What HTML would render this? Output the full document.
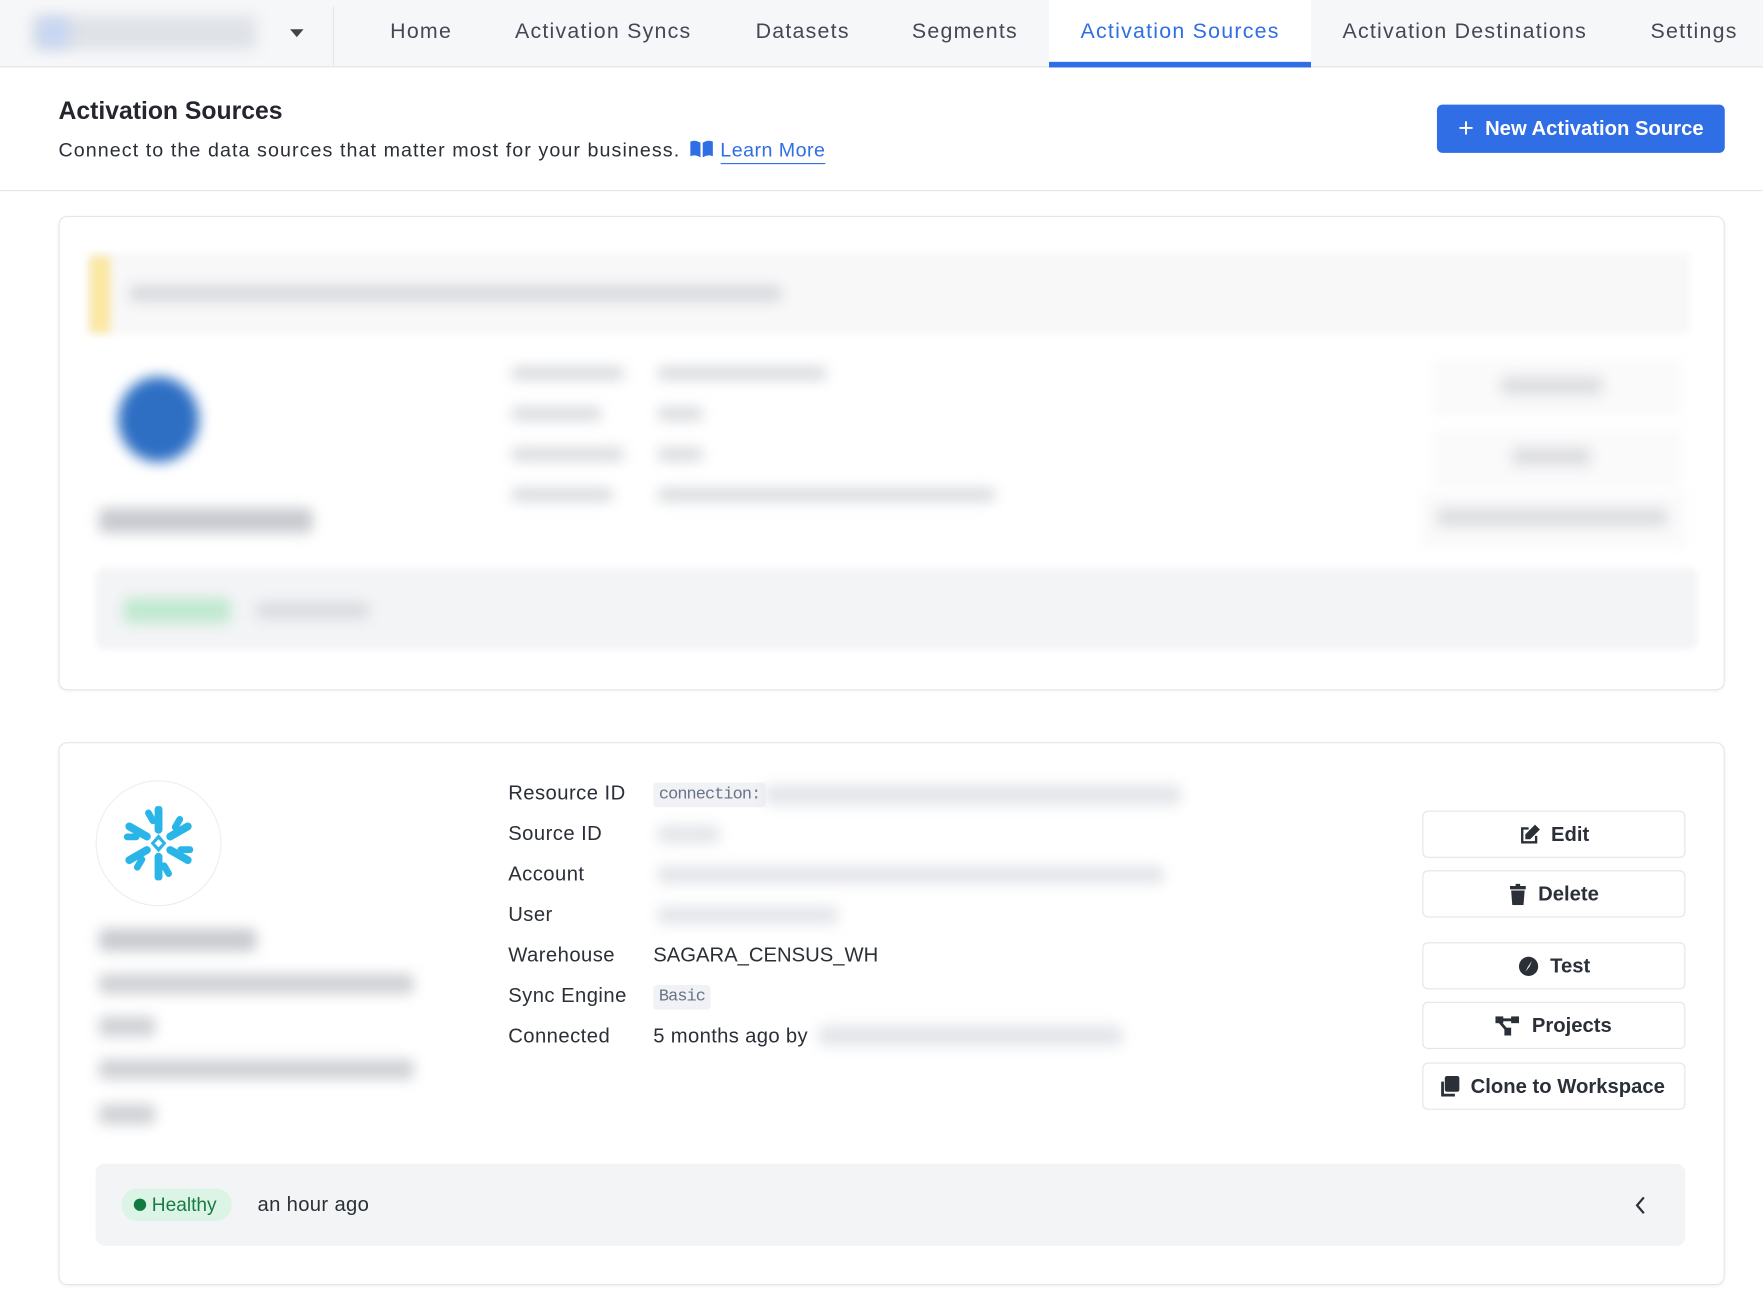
<!DOCTYPE html>
<html><head><meta charset="utf-8"><style>
*{box-sizing:border-box;margin:0;padding:0}
html,body{width:1763px;height:1305px;overflow:hidden;background:#fff;font-family:"Liberation Sans",sans-serif;color:#2b2f38}
#w{position:absolute;left:0;top:0;width:1568px;height:1161px;transform:scale(1.12436);transform-origin:0 0}
.a{position:absolute}
.hdr{left:0;top:0;width:1568px;height:60px;background:#f6f7f9;border-bottom:1px solid #e2e4e8}
.tab{top:0;height:59px;line-height:58px;font-size:19px;color:#434854;font-weight:500;letter-spacing:1.1px;white-space:nowrap}
.bl{filter:blur(6px);background:#d8dade;border-radius:4px}
.lbl{left:452px;font-size:18px;color:#2b2f38;letter-spacing:0.4px}
.val{left:581px;font-size:18px;color:#2b2f38;letter-spacing:0.3px}
.btn{left:1265px;width:234px;height:42px;border:1px solid #e3e5e9;border-radius:5px;background:#fff;font-size:18px;font-weight:bold;color:#2b2f38;display:flex;align-items:center;justify-content:center;gap:10px}
.card{left:52px;width:1482px;border:1px solid #e4e6ea;border-radius:8px;background:#fff;box-shadow:0 1px 3px rgba(0,0,0,.05)}
</style></head><body><div id="w">
<div class="a hdr"></div>
<div class="a bl" style="left:28px;top:14px;width:200px;height:30px;background:#dfe2e8"></div>
<div class="a bl" style="left:34px;top:16px;width:28px;height:26px;background:#c7d6f3"></div>
<div class="a" style="left:258px;top:26px;width:0;height:0;border-left:6px solid transparent;border-right:6px solid transparent;border-top:7px solid #444"></div>
<div class="a" style="left:296px;top:6px;width:1px;height:52px;background:#e2e4e8"></div>
<div class="a" style="left:933px;top:0;width:233px;height:60px;background:#fff"></div>
<div class="a" style="left:933px;top:55px;width:233px;height:5px;background:#2f6ee5"></div>
<div class="a tab" style="left:347px">Home</div>
<div class="a tab" style="left:458px">Activation Syncs</div>
<div class="a tab" style="left:672px">Datasets</div>
<div class="a tab" style="left:811px">Segments</div>
<div class="a tab" style="left:961px;color:#2f6ee5">Activation Sources</div>
<div class="a tab" style="left:1194px">Activation Destinations</div>
<div class="a tab" style="left:1468px">Settings</div>

<div class="a" style="left:52px;top:86px;font-size:22px;font-weight:bold;color:#23262d">Activation Sources</div>
<div class="a" style="left:52px;top:123px;font-size:17.5px;color:#2b2f38;white-space:nowrap;letter-spacing:0.95px">Connect to the data sources that matter most for your business.
<svg width="22" height="16" viewBox="0 0 22 16" style="vertical-align:-1px;margin-left:2px"><path d="M1 2q4-2 9 1v13q-5-3-9-1z M21 2q-4-2-9 1v13q5-3 9-1z" fill="#2f6ee5"/></svg>
<span style="color:#2f6ee5;border-bottom:1.5px solid #2f6ee5;padding-bottom:2px;letter-spacing:0.4px">Learn More</span></div>
<div class="a" style="left:1278px;top:93px;width:256px;height:43px;background:#2f6ee5;border-radius:5px;color:#fff;font-size:18px;font-weight:bold;display:flex;align-items:center;justify-content:center;gap:10px"><span style="font-size:24px;font-weight:normal;line-height:1">+</span>New Activation Source</div>
<div class="a" style="left:0;top:169px;width:1568px;height:1px;background:#e4e6ea"></div>

<div class="a card" style="top:192px;height:422px"></div>
<div class="a" style="left:78px;top:225px;width:1425px;height:72px;background:#f8f8f9;filter:blur(3px)"></div>
<div class="a" style="left:80px;top:228px;width:18px;height:68px;background:#fbe7a0;filter:blur(4px)"></div>
<div class="a bl" style="left:115px;top:254px;width:580px;height:14px;background:#d6d8dc"></div>
<div class="a" style="left:105px;top:335px;width:72px;height:76px;border-radius:50%;background:#2e6fc4;filter:blur(6px)"></div>
<div class="a bl" style="left:88px;top:452px;width:190px;height:22px;background:#c8cacf"></div>
<div class="a bl" style="left:455px;top:326px;width:100px;height:12px"></div>
<div class="a bl" style="left:585px;top:326px;width:150px;height:12px"></div>
<div class="a bl" style="left:455px;top:362px;width:80px;height:12px"></div>
<div class="a bl" style="left:585px;top:362px;width:40px;height:12px"></div>
<div class="a bl" style="left:455px;top:398px;width:100px;height:12px"></div>
<div class="a bl" style="left:585px;top:398px;width:40px;height:12px"></div>
<div class="a bl" style="left:455px;top:434px;width:90px;height:12px"></div>
<div class="a bl" style="left:585px;top:434px;width:300px;height:12px"></div>
<div class="a" style="left:1275px;top:320px;width:220px;height:50px;background:#fafafb;filter:blur(5px)"></div>
<div class="a" style="left:1275px;top:383px;width:220px;height:50px;background:#fafafb;filter:blur(5px)"></div>
<div class="a" style="left:1265px;top:437px;width:234px;height:50px;background:#fafafb;filter:blur(5px)"></div>
<div class="a bl" style="left:1335px;top:335px;width:90px;height:16px;background:#dcdde0"></div>
<div class="a bl" style="left:1345px;top:398px;width:70px;height:16px;background:#dcdde0"></div>
<div class="a bl" style="left:1278px;top:452px;width:205px;height:16px;background:#dcdde0"></div>
<div class="a" style="left:85px;top:505px;width:1425px;height:73px;background:#f3f4f6;border-radius:8px;filter:blur(3px)"></div>
<div class="a bl" style="left:110px;top:532px;width:95px;height:22px;background:#bfe8cf"></div>
<div class="a bl" style="left:228px;top:536px;width:100px;height:14px"></div>

<div class="a card" style="top:660px;height:483px"></div>
<div class="a" style="left:85px;top:694px;width:112px;height:112px;border-radius:50%;border:1px solid #eceef1"></div>
<svg class="a" style="left:108px;top:717px" width="66" height="66" viewBox="-33 -33 66 66">
<defs><g id="arm"><path d="M0 -12 L0 -30" stroke="#29b5e8" stroke-width="7" stroke-linecap="round"/><path d="M-9 -27 L-5 -20" stroke="#29b5e8" stroke-width="6" stroke-linecap="round"/></g></defs>
<use href="#arm" transform="rotate(0)"/><use href="#arm" transform="rotate(60)"/><use href="#arm" transform="rotate(120)"/>
<use href="#arm" transform="rotate(180)"/><use href="#arm" transform="rotate(240)"/><use href="#arm" transform="rotate(300)"/>
<path d="M0 -8 L7 0 L0 8 L-7 0Z M0 -3.5 L-3.5 0 L0 3.5 L3.5 0Z" fill="#29b5e8" fill-rule="evenodd"/>
</svg>
<div class="a bl" style="left:88px;top:826px;width:140px;height:20px;background:#c8cacf"></div>
<div class="a bl" style="left:88px;top:866px;width:280px;height:18px;background:#cfd1d5"></div>
<div class="a bl" style="left:88px;top:904px;width:50px;height:18px;background:#cfd1d5"></div>
<div class="a bl" style="left:88px;top:942px;width:280px;height:18px;background:#cfd1d5"></div>
<div class="a bl" style="left:88px;top:982px;width:50px;height:18px;background:#cfd1d5"></div>

<div class="a lbl" style="top:695px">Resource ID</div>
<div class="a lbl" style="top:731px">Source ID</div>
<div class="a lbl" style="top:767px">Account</div>
<div class="a lbl" style="top:803px">User</div>
<div class="a lbl" style="top:839px">Warehouse</div>
<div class="a lbl" style="top:875px">Sync Engine</div>
<div class="a lbl" style="top:911px">Connected</div>
<div class="a" style="left:581px;top:696px;height:22px;padding:0 5px;background:#f1f2f5;border-radius:3px;font-family:'Liberation Mono',monospace;font-size:15px;color:#6a7385;line-height:22px;letter-spacing:-0.8px">connection:</div>
<div class="a bl" style="left:680px;top:698px;width:370px;height:18px;background:#e3e5e9"></div>
<div class="a bl" style="left:585px;top:734px;width:55px;height:16px;background:#e3e5e9"></div>
<div class="a bl" style="left:585px;top:770px;width:450px;height:16px;background:#e3e5e9"></div>
<div class="a bl" style="left:585px;top:806px;width:160px;height:16px;background:#e3e5e9"></div>
<div class="a val" style="top:839px;letter-spacing:0">SAGARA_CENSUS_WH</div>
<div class="a" style="left:581px;top:876px;height:22px;padding:0 5px;background:#f1f2f5;border-radius:3px;font-family:'Liberation Mono',monospace;font-size:15px;color:#6a7385;line-height:22px;letter-spacing:-0.8px">Basic</div>
<div class="a val" style="top:911px">5 months ago by</div>
<div class="a bl" style="left:728px;top:912px;width:270px;height:18px;background:#e3e5e9"></div>

<div class="a btn" style="top:721px"><svg width="19" height="19" viewBox="0 0 20 20" fill="none" stroke="#2b2f38" stroke-width="2.2"><path d="M9 4H3v13h13v-6"/><path d="M15 2l3 3-8 8H7v-3z" fill="#2b2f38"/></svg>Edit</div>
<div class="a btn" style="top:774px"><svg width="16" height="19" viewBox="0 0 16 19"><rect x="1" y="2" width="14" height="3" fill="#2b2f38"/><rect x="6" y="0" width="4" height="3" fill="#2b2f38"/><path d="M2 6h12l-1 13H3z" fill="#2b2f38"/></svg>Delete</div>
<div class="a btn" style="top:838px"><svg width="19" height="19" viewBox="0 0 20 20"><circle cx="10" cy="10" r="9" fill="#2b2f38"/><path d="M13 5l-4 6-2 4 4-5z" fill="#fff"/></svg>Test</div>
<div class="a btn" style="top:891px"><svg width="22" height="18" viewBox="0 0 22 18" fill="#2b2f38"><rect x="0" y="1" width="7" height="6"/><rect x="14" y="1" width="7" height="6"/><rect x="8" y="11" width="6" height="7"/><path d="M6 4h9M4 6l6 7" stroke="#2b2f38" stroke-width="2.5"/></svg>Projects</div>
<div class="a btn" style="top:945px;justify-content:flex-start;padding-left:14px"><svg width="18" height="19" viewBox="0 0 18 19"><rect x="5" y="0" width="13" height="14" rx="2" fill="#2b2f38"/><path d="M3 5v12h11" fill="none" stroke="#2b2f38" stroke-width="2.5"/></svg>Clone to Workspace</div>

<div class="a" style="left:85px;top:1035px;width:1414px;height:73px;background:#f3f4f6;border-radius:8px"></div>
<div class="a" style="left:108px;top:1057px;width:98px;height:29px;background:#dcf4e6;border-radius:14px;font-size:17px;color:#197a44;line-height:29px;padding-left:27px">Healthy</div>
<div class="a" style="left:119px;top:1066px;width:11px;height:11px;border-radius:50%;background:#137a3f"></div>
<div class="a" style="left:229px;top:1061px;font-size:18px;letter-spacing:0.3px">an hour ago</div>
<svg class="a" style="left:1453px;top:1063px" width="12" height="18" viewBox="0 0 12 18"><path d="M9 2L3 9l6 7" fill="none" stroke="#2b2f38" stroke-width="2"/></svg>
</div></body></html>
